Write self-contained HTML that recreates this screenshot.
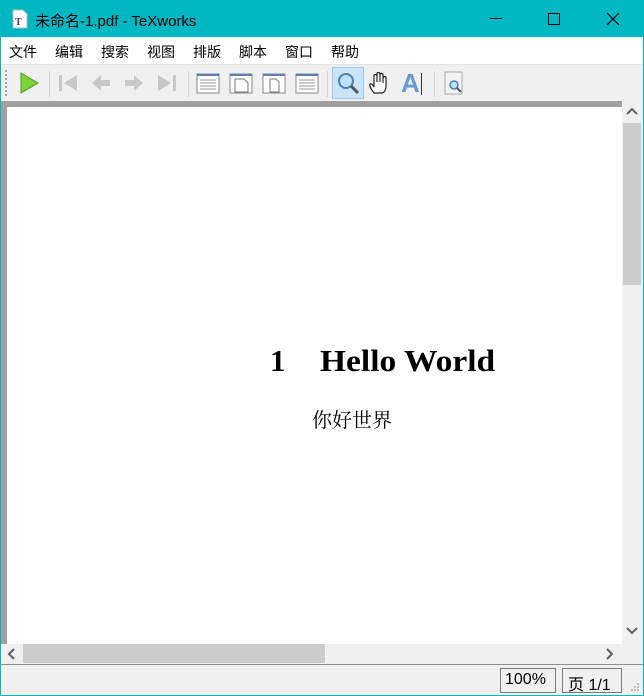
<!DOCTYPE html>
<html><head><meta charset="utf-8"><style>
*{margin:0;padding:0;box-sizing:border-box}
body{width:644px;height:696px;background:#00b7c3;position:relative;overflow:hidden;font-family:"Liberation Sans","Microsoft YaHei","Noto Sans CJK SC",sans-serif}
.abs{position:absolute}
.title{left:0;top:0;width:644px;height:37px;background:#00b7c3;color:#000;font-size:15px}
.menu{left:1px;top:37px;width:642px;height:27px;background:#fff;font-size:14px;color:#000}
.menu span{position:absolute;top:5px}
.tb{left:1px;top:64px;width:642px;height:37px;background:#f0f0f0;border-top:1px solid #e3e3e3}
.sep{position:absolute;top:6px;width:1px;height:26px;background:#d4d4d4}
.ic{position:absolute;top:6px;width:24px;height:24px}
</style></head><body>
<div class="abs title">
 <svg class="abs" style="left:12px;top:9px" width="16" height="20" viewBox="0 0 16 20"><path d="M1 1h10l4 4v14H1z" fill="#fff" stroke="#bbb"/><text x="3" y="16" font-size="10" font-family="Liberation Serif" font-weight="bold" fill="#3a3a8a">T</text></svg>
 <span class="abs" style="left:35px;top:10px">未命名-1.pdf - TeXworks</span>
 <div class="abs" style="left:490px;top:18px;width:12px;height:1px;background:#000"></div>
 <div class="abs" style="left:548px;top:13px;width:12px;height:12px;border:1px solid #000"></div>
 <svg class="abs" style="left:606px;top:12px" width="14" height="14"><path d="M1 1L13 13M13 1L1 13" stroke="#000" stroke-width="1.2"/></svg>
</div>
<div class="abs menu">
 <span style="left:8px">文件</span><span style="left:54px">编辑</span><span style="left:100px">搜索</span><span style="left:146px">视图</span><span style="left:192px">排版</span><span style="left:238px">脚本</span><span style="left:284px">窗口</span><span style="left:330px">帮助</span>
</div>
<div class="abs tb">
 <div class="abs" style="left:4px;top:5px;width:2px;height:26px;border-left:2px dotted #aaa"></div>
 <svg class="ic" style="left:16px" viewBox="0 0 24 24"><path d="M4 2L21 12L4 22Z" fill="#7dd23a" stroke="#4a9a1a"/></svg>
 <div class="sep" style="left:48px"></div>
 <svg class="ic" style="left:55px" viewBox="0 0 24 24"><path d="M3 4h3v16H3zM21 4v16L8 12z" fill="#c8c8c8"/></svg>
 <svg class="ic" style="left:88px" viewBox="0 0 24 24"><path d="M3 12l9-8v5h9v6h-9v5z" fill="#c8c8c8"/></svg>
 <svg class="ic" style="left:121px" viewBox="0 0 24 24"><path d="M21 12l-9-8v5H3v6h9v5z" fill="#c8c8c8"/></svg>
 <svg class="ic" style="left:154px" viewBox="0 0 24 24"><path d="M18 4h3v16h-3zM3 4v16l13-8z" fill="#c8c8c8"/></svg>
 <div class="sep" style="left:187px"></div>
 <svg class="ic" style="left:195px" viewBox="0 0 24 24"><rect x="1" y="3" width="22" height="19" fill="#fff" stroke="#888"/><rect x="1" y="3" width="22" height="2" fill="#5a7fb0"/><path d="M4 9h16M4 12h16M4 15h16M4 18h16" stroke="#999"/></svg>
 <svg class="ic" style="left:228px" viewBox="0 0 24 24"><rect x="1" y="3" width="22" height="19" fill="#fff" stroke="#888"/><rect x="1" y="3" width="22" height="2" fill="#5a7fb0"/><path d="M6 8h9l4 4v9H6z" fill="#fff" stroke="#777"/></svg>
 <svg class="ic" style="left:261px" viewBox="0 0 24 24"><rect x="1" y="3" width="22" height="19" fill="#fff" stroke="#888"/><rect x="1" y="3" width="22" height="2" fill="#5a7fb0"/><path d="M8 8h6l3 3v10H8z" fill="#fff" stroke="#777"/></svg>
 <svg class="ic" style="left:294px" viewBox="0 0 24 24"><rect x="1" y="3" width="22" height="19" fill="#fff" stroke="#888"/><rect x="1" y="3" width="22" height="2" fill="#5a7fb0"/><path d="M4 9h16M4 12h16M4 15h16M4 18h16" stroke="#999"/></svg>
 <div class="sep" style="left:326px"></div>
 <div class="abs" style="left:331px;top:2px;width:32px;height:32px;background:#cce4f7;border:1px solid #99c9ef"></div>
 <svg class="ic" style="left:335px" viewBox="0 0 24 24"><circle cx="10" cy="10" r="7" fill="#bfe0ff" stroke="#4a7fb5" stroke-width="2"/><path d="M15 15l7 7" stroke="#555" stroke-width="3"/></svg>
 <svg class="ic" style="left:367px" viewBox="0 0 24 24"><path d="M6 22c-3-4-5-7-4-9 1-1 3 1 4 3V5c0-2 3-2 3 0v6V3c0-2 3-2 3 0v8V4c0-2 3-2 3 0v8V7c0-2 3-2 3 0v8c0 4-2 7-4 7z" fill="#fff" stroke="#222" stroke-width="1.2"/></svg>
 <span class="abs" style="left:400px;top:3px;font:bold 26px 'Liberation Sans';color:#6a9ad0">A</span>
 <div class="abs" style="left:420px;top:8px;width:1px;height:22px;background:#333"></div>
 <div class="sep" style="left:433px"></div>
 <svg class="ic" style="left:441px" viewBox="0 0 24 24"><rect x="3" y="1" width="17" height="22" fill="#f4f4f4" stroke="#aaa"/><circle cx="12" cy="14" r="4" fill="#bfe0ff" stroke="#4a7fb5" stroke-width="1.5"/><path d="M15 17l4 4" stroke="#555" stroke-width="2"/></svg>
</div>
<div class="abs" style="left:1px;top:101px;width:621px;height:543px;background:#a0a0a0"></div>
<div class="abs" style="left:7px;top:107px;width:615px;height:537px;background:#fff"></div>
<div class="abs" style="left:270px;top:343px;font:bold 31px 'Liberation Serif',serif;color:#000;white-space:nowrap">1</div>
<div class="abs" style="left:320px;top:343px;font:bold 31px 'Liberation Serif',serif;color:#000;white-space:nowrap;transform:scaleX(1.08);transform-origin:0 0">Hello World</div>
<div class="abs" style="left:312px;top:404px;font:20px 'Noto Serif CJK SC',serif;color:#000;white-space:nowrap">你好世界</div>
<div class="abs" style="left:622px;top:101px;width:21px;height:543px;background:#f0f0f0"></div>
<div class="abs" style="left:623px;top:123px;width:18px;height:162px;background:#cdcdcd"></div>
<svg class="abs" style="left:626px;top:107px" width="12" height="8"><path d="M1 7L6 2L11 7" stroke="#606060" stroke-width="2" fill="none"/></svg>
<svg class="abs" style="left:626px;top:627px" width="12" height="8"><path d="M1 1L6 6L11 1" stroke="#606060" stroke-width="2" fill="none"/></svg>
<div class="abs" style="left:1px;top:644px;width:642px;height:20px;background:#f0f0f0"></div>
<div class="abs" style="left:23px;top:644px;width:302px;height:19px;background:#cdcdcd"></div>
<svg class="abs" style="left:7px;top:648px" width="8" height="12"><path d="M7 1L2 6L7 11" stroke="#606060" stroke-width="2" fill="none"/></svg>
<svg class="abs" style="left:606px;top:648px" width="8" height="12"><path d="M1 1L6 6L1 11" stroke="#606060" stroke-width="2" fill="none"/></svg>
<div class="abs" style="left:1px;top:664px;width:642px;height:1px;background:#8a9098"></div>
<div class="abs" style="left:1px;top:665px;width:642px;height:30px;background:#f0f0f0"></div>
<div class="abs" style="left:500px;top:668px;width:56px;height:25px;border:1px solid #7a7a7a;font-size:16px;padding:2px 0 0 4px;color:#000">100%</div>
<div class="abs" style="left:562px;top:668px;width:60px;height:25px;border:1px solid #7a7a7a;font-size:16px;padding:2px 0 0 5px;color:#000">页 1/1</div>
<svg class="abs" style="left:630px;top:682px" width="10" height="10"><g fill="#bbb"><rect x="7" y="1" width="2" height="2"/><rect x="4" y="4" width="2" height="2"/><rect x="7" y="4" width="2" height="2"/><rect x="1" y="7" width="2" height="2"/><rect x="4" y="7" width="2" height="2"/><rect x="7" y="7" width="2" height="2"/></g></svg>
</body></html>
